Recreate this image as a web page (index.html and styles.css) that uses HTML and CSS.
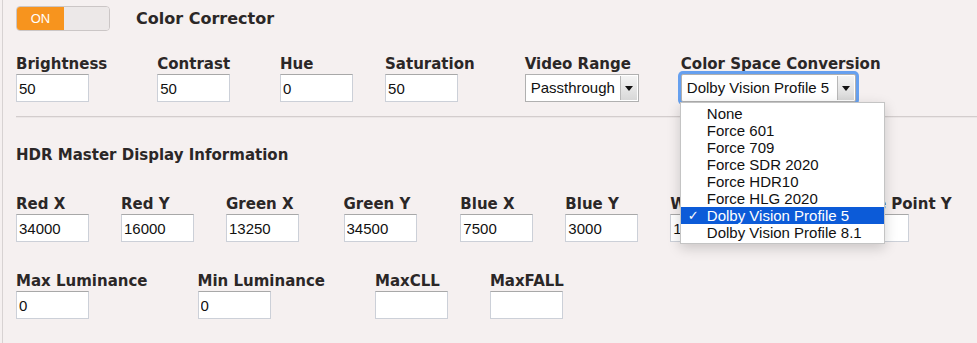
FILE: index.html
```html
<!DOCTYPE html>
<html lang="en">
<head>
    <meta charset="UTF-8">
    <title>Color Corrector</title>
    <link rel="stylesheet" href="styles.css">
</head>
<body>
    <div class="panel">
        <!-- Header -->
        <div class="header">
            <div class="toggle">
                <span class="toggle-on">ON</span>
                <span class="toggle-off"></span>
            </div>
            <h1 class="title">Color Corrector</h1>
        </div>

        <!-- Basic adjustments -->
        <div class="row first-row">
            <div class="field">
                <label>Brightness</label>
                <input class="text-input" type="text" value="50">
            </div>
            <div class="field">
                <label>Contrast</label>
                <input class="text-input" type="text" value="50">
            </div>
            <div class="field">
                <label>Hue</label>
                <input class="text-input" type="text" value="0">
            </div>
            <div class="field">
                <label>Saturation</label>
                <input class="text-input" type="text" value="50">
            </div>
            <div class="field">
                <label>Video Range</label>
                <div class="select range-select">
                    <span class="select-value">Passthrough</span>
                    <span class="select-arrow"><i class="triangle"></i></span>
                </div>
            </div>
            <div class="field">
                <label>Color Space Conversion</label>
                <div class="select-wrap">
                    <div class="select space-select focused">
                        <span class="select-value">Dolby Vision Profile 5</span>
                        <span class="select-arrow"><i class="triangle"></i></span>
                    </div>
                    <ul class="dropdown">
                        <li class="option">None</li>
                        <li class="option">Force 601</li>
                        <li class="option">Force 709</li>
                        <li class="option">Force SDR 2020</li>
                        <li class="option">Force HDR10</li>
                        <li class="option">Force HLG 2020</li>
                        <li class="option selected"><span class="check">&#10003;</span>Dolby Vision Profile 5</li>
                        <li class="option">Dolby Vision Profile 8.1</li>
                    </ul>
                </div>
            </div>
        </div>

        <hr class="divider">

        <h2 class="section-title">HDR Master Display Information</h2>

        <!-- Primaries -->
        <div class="row second-row">
            <div class="field">
                <label>Red X</label>
                <input class="text-input" type="text" value="34000">
            </div>
            <div class="field">
                <label>Red Y</label>
                <input class="text-input" type="text" value="16000">
            </div>
            <div class="field">
                <label>Green X</label>
                <input class="text-input" type="text" value="13250">
            </div>
            <div class="field">
                <label>Green Y</label>
                <input class="text-input" type="text" value="34500">
            </div>
            <div class="field">
                <label>Blue X</label>
                <input class="text-input" type="text" value="7500">
            </div>
            <div class="field">
                <label>Blue Y</label>
                <input class="text-input" type="text" value="3000">
            </div>
            <div class="field">
                <label>White Point X</label>
                <input class="text-input" type="text" value="15635">
            </div>
            <div class="field">
                <label>White Point Y</label>
                <input class="text-input" type="text" value="16450">
            </div>
        </div>

        <!-- Luminance -->
        <div class="row third-row">
            <div class="field">
                <label>Max Luminance</label>
                <input class="text-input" type="text" value="0">
            </div>
            <div class="field">
                <label>Min Luminance</label>
                <input class="text-input" type="text" value="0">
            </div>
            <div class="field">
                <label>MaxCLL</label>
                <input class="text-input" type="text" value="">
            </div>
            <div class="field">
                <label>MaxFALL</label>
                <input class="text-input" type="text" value="">
            </div>
        </div>
    </div>
</body>
</html>
```

FILE: styles.css
```css
body {
    margin: 0;
    background-color: #f5f0f0;
    font-family: "DejaVu Sans", sans-serif;
    color: #2b2727;
}
.panel {
    margin-left: 2px;
    border-left: 1px solid #d7d2d2;
    min-height: 343px;
    padding: 6px 0 0 13px;
    box-sizing: border-box;
}
.header {
    display: flex;
    align-items: center;
    height: 25px;
}
.toggle {
    display: flex;
    width: 94px;
    height: 25px;
    border: 1px solid #cbc6c6;
    border-radius: 4px;
    overflow: hidden;
    box-sizing: border-box;
}
.toggle-on {
    width: 47px;
    background-color: #f7941e;
    color: #fff;
    font-family: "Liberation Sans", Arial, sans-serif;
    font-size: 13px;
    display: flex;
    align-items: center;
    justify-content: center;
}
.toggle-off {
    flex: 1;
    background-color: #ece8e8;
}
.title {
    margin: 0 0 0 26px;
    font-size: 16px;
    font-weight: bold;
}
.row {
    display: flex;
    gap: 32px;
    align-items: flex-start;
}
.first-row {
    margin-top: 24px;
}
.second-row {
    margin-top: 31px;
}
.third-row {
    margin-top: 30px;
}
.field {
    display: flex;
    flex-direction: column;
}
.field label {
    font-size: 15px;
    font-weight: bold;
    line-height: 18px;
    padding-right: 18px;
    margin-bottom: 1px;
    white-space: nowrap;
}
.text-input {
    width: 73px;
    height: 28px;
    box-sizing: border-box;
    margin: 0;
    border: 1px solid #ccd0d8;
    border-top-color: #a8a8a8;
    background-color: #fff;
    font-family: "Liberation Sans", Arial, sans-serif;
    font-size: 15px;
    color: #111;
    padding: 0 2px;
    outline: none;
}
.select {
    display: flex;
    height: 28px;
    box-sizing: border-box;
    border: 1px solid #b0b0b0;
    background-color: #fff;
}
.range-select {
    width: 114px;
}
.space-select {
    width: 175px;
}
.select.focused {
    border-radius: 2px;
    box-shadow: 0 0 0 3px #66a0ef;
}
.select-value {
    flex: 1;
    font-family: "Liberation Sans", Arial, sans-serif;
    font-size: 15px;
    line-height: 26px;
    padding-left: 5px;
    color: #111;
    white-space: nowrap;
    overflow: hidden;
}
.select-arrow {
    width: 16px;
    margin: 1px;
    border-left: 1px solid #b8b8b8;
    background: linear-gradient(#f4f4f4, #d8d8d8);
    display: flex;
    align-items: center;
    justify-content: center;
}
.triangle {
    width: 0;
    height: 0;
    border-left: 4px solid transparent;
    border-right: 4px solid transparent;
    border-top: 5px solid #111;
}
.select-wrap {
    position: relative;
}
.dropdown {
    position: absolute;
    top: 100%;
    left: -1px;
    width: 205px;
    margin: 0;
    padding: 2px 0;
    list-style: none;
    background-color: #fff;
    border: 1px solid #c4c4c4;
    box-sizing: border-box;
    box-shadow: 0 4px 12px rgba(0, 0, 0, 0.18);
    z-index: 10;
}
.option {
    position: relative;
    height: 17px;
    line-height: 17px;
    padding-left: 26px;
    font-family: "Liberation Sans", Arial, sans-serif;
    font-size: 15px;
    color: #111;
    white-space: nowrap;
}
.option.selected {
    background-color: #0c5bd8;
    color: #fff;
}
.check {
    position: absolute;
    left: 7px;
    font-family: "DejaVu Sans", sans-serif;
    font-size: 13px;
}
.divider {
    height: 0;
    margin: 14px 0 0 0;
    border: 0;
    border-top: 1px solid #d3cdcd;
    border-bottom: 1px solid #ebe6e6;
}
.section-title {
    margin: 28px 0 0 0;
    font-size: 15px;
    font-weight: bold;
    line-height: 18px;
}
```
